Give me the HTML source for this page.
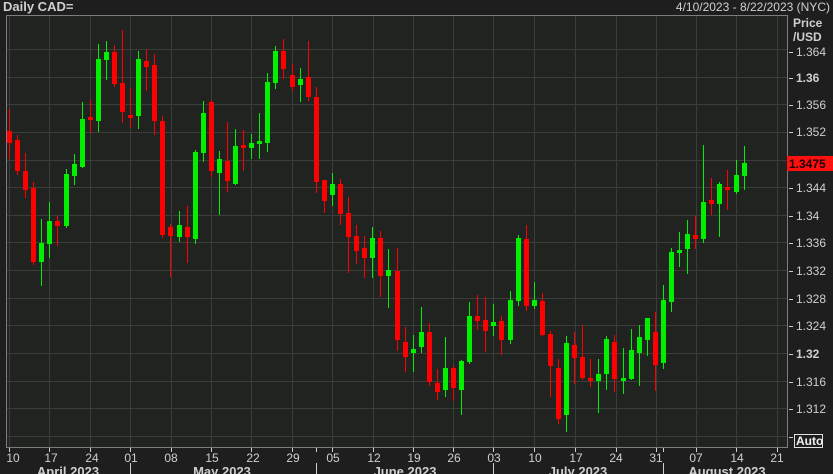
<!DOCTYPE html>
<html><head><meta charset="utf-8"><style>
html,body{margin:0;padding:0;background:#1e1e1e;width:833px;height:474px;overflow:hidden}
svg{display:block}
text{font-family:"Liberation Sans","DejaVu Sans",sans-serif;fill:#cfcfcf}
.r{fill:#ff0000}.g{fill:#00f000}
</style></head><body>
<svg width="833" height="474" viewBox="0 0 833 474" xmlns="http://www.w3.org/2000/svg">
<rect x="0" y="0" width="833" height="474" fill="#1e1e1e"/>
<rect x="6" y="15" width="781" height="432" fill="#212321"/>
<g stroke="#3b3d3b" stroke-width="1">
<path d="M6 49.5H787M6 77.5H787M6 104.5H787M6 132.5H787M6 160.5H787M6 187.5H787M6 215.5H787M6 242.5H787M6 270.5H787M6 298.5H787M6 325.5H787M6 353.5H787M6 381.5H787M6 408.5H787M6 436.5H787"/>
<path d="M9.5 15V447M49.5 15V447M90.5 15V447M130.5 15V447M171.5 15V447M211.5 15V447M251.5 15V447M292.5 15V447M332.5 15V447M373.5 15V447M413.5 15V447M453.5 15V447M493.5 15V447M534.5 15V447M575.5 15V447M616.5 15V447M656.5 15V447M696.5 15V447M736.5 15V447M777.5 15V447"/>
</g>
<path d="M6.5 15.5H787.5V447.5H6.5Z" fill="none" stroke="#7d7d7d" stroke-width="1"/>
<text x="3" y="11" font-size="13" font-weight="bold" fill="#c8c8c8">Daily CAD=</text>
<text x="830" y="11" font-size="12" text-anchor="end">4/10/2023 - 8/22/2023 (NYC)</text>
<text x="793" y="27" font-size="12" font-weight="bold">Price</text>
<text x="793" y="41" font-size="12" font-weight="bold">/USD</text>
<g stroke="#cfcfcf"><path d="M789 52.5H793M789 78.5H793M789 105.5H793M789 132.5H793M789 188.5H793M789 216.5H793M789 243.5H793M789 271.5H793M789 299.5H793M789 326.5H793M789 354.5H793M789 382.5H793M789 409.5H793M789 437.5H793"/></g>
<g font-size="12">
<text x="796" y="56">1.364</text>
<text x="796" y="82" font-weight="bold">1.36</text>
<text x="796" y="109">1.356</text>
<text x="796" y="136">1.352</text>
<text x="796" y="192">1.344</text>
<text x="796" y="220">1.34</text>
<text x="796" y="247">1.336</text>
<text x="796" y="275">1.332</text>
<text x="796" y="303">1.328</text>
<text x="796" y="330">1.324</text>
<text x="796" y="358" font-weight="bold">1.32</text>
<text x="796" y="386">1.316</text>
<text x="796" y="413">1.312</text>
</g>
<rect x="787" y="156" width="46" height="15" fill="#ff1010"/>
<text x="789" y="168" font-size="12" font-weight="bold" style="fill:#1a0000">1.3475</text>
<rect x="794.5" y="434.5" width="28" height="13" fill="none" stroke="#e0e0e0"/>
<text x="796" y="445" font-size="12" font-weight="bold" style="fill:#f0f0f0">Auto</text>
<g stroke="#cfcfcf"><path d="M9.5 448V452M49.5 448V452M90.5 448V452M130.5 448V452M171.5 448V452M211.5 448V452M251.5 448V452M292.5 448V452M316.5 448V452M332.5 448V452M373.5 448V452M413.5 448V452M453.5 448V452M493.5 448V452M534.5 448V452M575.5 448V452M616.5 448V452M656.5 448V452M663.5 448V452M696.5 448V452M736.5 448V452M777.5 448V452M130.5 463V474M316.5 463V474M493.5 463V474M663.5 463V474"/></g>
<g font-size="12" text-anchor="middle">
<text x="13" y="462">10</text><text x="51" y="462">17</text><text x="92" y="462">24</text><text x="131" y="462">01</text><text x="171" y="462">08</text><text x="212" y="462">15</text><text x="253" y="462">22</text><text x="293" y="462">29</text><text x="333" y="462">05</text><text x="374" y="462">12</text><text x="414" y="462">19</text><text x="454" y="462">26</text><text x="494" y="462">03</text><text x="535" y="462">10</text><text x="576" y="462">17</text><text x="616" y="462">24</text><text x="656" y="462">31</text><text x="696" y="462">07</text><text x="737" y="462">14</text><text x="777" y="462">21</text>
</g>
<g font-size="13" font-weight="bold" text-anchor="middle">
<text x="68" y="476">April 2023</text><text x="222" y="476">May 2023</text><text x="405" y="476">June 2023</text><text x="578" y="476">July 2023</text><text x="727" y="476">August 2023</text>
</g>
<g id="c">
<rect class="r" x="9" y="109" width="1" height="50"/><rect class="r" x="7" y="131" width="5" height="12"/>
<rect class="r" x="17" y="135" width="1" height="40"/><rect class="r" x="15" y="140" width="5" height="31"/>
<rect class="r" x="25" y="153" width="1" height="45"/><rect class="r" x="23" y="171" width="5" height="19"/>
<rect class="r" x="33" y="182" width="1" height="83"/><rect class="r" x="31" y="188" width="5" height="74"/>
<rect class="g" x="41" y="219" width="1" height="67"/><rect class="g" x="39" y="243" width="5" height="19"/>
<rect class="g" x="49" y="202" width="1" height="56"/><rect class="g" x="47" y="221" width="5" height="23"/>
<rect class="r" x="57" y="216" width="1" height="30"/><rect class="r" x="55" y="221" width="5" height="5"/>
<rect class="g" x="66" y="169" width="1" height="59"/><rect class="g" x="64" y="174" width="5" height="52"/>
<rect class="g" x="74" y="154" width="1" height="31"/><rect class="g" x="72" y="164" width="5" height="12"/>
<rect class="g" x="82" y="102" width="1" height="66"/><rect class="g" x="80" y="119" width="5" height="48"/>
<rect class="r" x="90" y="100" width="1" height="33"/><rect class="r" x="88" y="117" width="5" height="3"/>
<rect class="g" x="98" y="44" width="1" height="88"/><rect class="g" x="96" y="59" width="5" height="62"/>
<rect class="g" x="106" y="41" width="1" height="39"/><rect class="g" x="104" y="52" width="5" height="8"/>
<rect class="r" x="114" y="45" width="1" height="42"/><rect class="r" x="112" y="52" width="5" height="32"/>
<rect class="r" x="122" y="30" width="1" height="93"/><rect class="r" x="120" y="83" width="5" height="29"/>
<rect class="r" x="130" y="88" width="1" height="40"/><rect class="r" x="128" y="115" width="5" height="3"/>
<rect class="g" x="138" y="51" width="1" height="78"/><rect class="g" x="136" y="59" width="5" height="57"/>
<rect class="r" x="146" y="49" width="1" height="42"/><rect class="r" x="144" y="61" width="5" height="6"/>
<rect class="r" x="154" y="54" width="1" height="81"/><rect class="r" x="152" y="65" width="5" height="56"/>
<rect class="r" x="162" y="116" width="1" height="122"/><rect class="r" x="160" y="121" width="5" height="114"/>
<rect class="r" x="170" y="224" width="1" height="53"/><rect class="r" x="168" y="227" width="5" height="9"/>
<rect class="g" x="179" y="211" width="1" height="31"/><rect class="g" x="177" y="225" width="5" height="12"/>
<rect class="r" x="187" y="206" width="1" height="57"/><rect class="r" x="185" y="227" width="5" height="10"/>
<rect class="g" x="195" y="150" width="1" height="94"/><rect class="g" x="193" y="152" width="5" height="87"/>
<rect class="g" x="203" y="101" width="1" height="61"/><rect class="g" x="201" y="113" width="5" height="40"/>
<rect class="r" x="211" y="100" width="1" height="77"/><rect class="r" x="209" y="102" width="5" height="69"/>
<rect class="g" x="219" y="151" width="1" height="64"/><rect class="g" x="217" y="159" width="5" height="14"/>
<rect class="r" x="227" y="122" width="1" height="70"/><rect class="r" x="225" y="161" width="5" height="20"/>
<rect class="g" x="235" y="129" width="1" height="56"/><rect class="g" x="233" y="146" width="5" height="38"/>
<rect class="r" x="243" y="130" width="1" height="41"/><rect class="r" x="241" y="145" width="5" height="3"/>
<rect class="g" x="251" y="134" width="1" height="25"/><rect class="g" x="249" y="143" width="5" height="5"/>
<rect class="g" x="259" y="113" width="1" height="46"/><rect class="g" x="257" y="141" width="5" height="3"/>
<rect class="g" x="267" y="73" width="1" height="79"/><rect class="g" x="265" y="82" width="5" height="61"/>
<rect class="g" x="275" y="46" width="1" height="43"/><rect class="g" x="273" y="51" width="5" height="32"/>
<rect class="r" x="283" y="39" width="1" height="40"/><rect class="r" x="281" y="51" width="5" height="18"/>
<rect class="r" x="292" y="64" width="1" height="27"/><rect class="r" x="290" y="75" width="5" height="12"/>
<rect class="g" x="300" y="68" width="1" height="34"/><rect class="g" x="298" y="79" width="5" height="6"/>
<rect class="r" x="308" y="41" width="1" height="60"/><rect class="r" x="306" y="77" width="5" height="20"/>
<rect class="r" x="316" y="87" width="1" height="106"/><rect class="r" x="314" y="97" width="5" height="85"/>
<rect class="r" x="324" y="180" width="1" height="33"/><rect class="r" x="322" y="180" width="5" height="21"/>
<rect class="g" x="332" y="173" width="1" height="33"/><rect class="g" x="330" y="184" width="5" height="11"/>
<rect class="r" x="340" y="179" width="1" height="46"/><rect class="r" x="338" y="184" width="5" height="30"/>
<rect class="r" x="348" y="197" width="1" height="76"/><rect class="r" x="346" y="213" width="5" height="24"/>
<rect class="r" x="356" y="225" width="1" height="39"/><rect class="r" x="354" y="236" width="5" height="15"/>
<rect class="r" x="364" y="236" width="1" height="42"/><rect class="r" x="362" y="248" width="5" height="10"/>
<rect class="g" x="372" y="227" width="1" height="51"/><rect class="g" x="370" y="238" width="5" height="20"/>
<rect class="r" x="380" y="231" width="1" height="66"/><rect class="r" x="378" y="238" width="5" height="38"/>
<rect class="g" x="388" y="249" width="1" height="59"/><rect class="g" x="386" y="270" width="5" height="6"/>
<rect class="r" x="397" y="248" width="1" height="103"/><rect class="r" x="395" y="271" width="5" height="69"/>
<rect class="r" x="405" y="327" width="1" height="45"/><rect class="r" x="403" y="342" width="5" height="15"/>
<rect class="g" x="413" y="335" width="1" height="37"/><rect class="g" x="411" y="349" width="5" height="4"/>
<rect class="g" x="421" y="307" width="1" height="46"/><rect class="g" x="419" y="332" width="5" height="15"/>
<rect class="r" x="429" y="323" width="1" height="63"/><rect class="r" x="427" y="332" width="5" height="50"/>
<rect class="r" x="437" y="369" width="1" height="31"/><rect class="r" x="435" y="383" width="5" height="9"/>
<rect class="g" x="445" y="337" width="1" height="60"/><rect class="g" x="443" y="368" width="5" height="22"/>
<rect class="r" x="453" y="366" width="1" height="35"/><rect class="r" x="451" y="368" width="5" height="20"/>
<rect class="g" x="461" y="360" width="1" height="55"/><rect class="g" x="459" y="361" width="5" height="29"/>
<rect class="g" x="469" y="302" width="1" height="62"/><rect class="g" x="467" y="316" width="5" height="46"/>
<rect class="r" x="477" y="295" width="1" height="35"/><rect class="r" x="475" y="316" width="5" height="5"/>
<rect class="r" x="485" y="297" width="1" height="55"/><rect class="r" x="483" y="320" width="5" height="11"/>
<rect class="g" x="493" y="304" width="1" height="32"/><rect class="g" x="491" y="322" width="5" height="4"/>
<rect class="r" x="501" y="316" width="1" height="39"/><rect class="r" x="499" y="321" width="5" height="19"/>
<rect class="g" x="510" y="291" width="1" height="53"/><rect class="g" x="508" y="300" width="5" height="40"/>
<rect class="g" x="518" y="235" width="1" height="71"/><rect class="g" x="516" y="238" width="5" height="63"/>
<rect class="r" x="526" y="225" width="1" height="86"/><rect class="r" x="524" y="239" width="5" height="67"/>
<rect class="g" x="534" y="282" width="1" height="27"/><rect class="g" x="532" y="300" width="5" height="6"/>
<rect class="r" x="542" y="293" width="1" height="43"/><rect class="r" x="540" y="301" width="5" height="34"/>
<rect class="r" x="550" y="331" width="1" height="66"/><rect class="r" x="548" y="334" width="5" height="32"/>
<rect class="r" x="558" y="359" width="1" height="65"/><rect class="r" x="556" y="368" width="5" height="51"/>
<rect class="g" x="566" y="336" width="1" height="96"/><rect class="g" x="564" y="343" width="5" height="72"/>
<rect class="r" x="574" y="332" width="1" height="52"/><rect class="r" x="572" y="345" width="5" height="13"/>
<rect class="r" x="582" y="325" width="1" height="55"/><rect class="r" x="580" y="357" width="5" height="21"/>
<rect class="r" x="590" y="359" width="1" height="28"/><rect class="r" x="588" y="378" width="5" height="3"/>
<rect class="g" x="598" y="359" width="1" height="54"/><rect class="g" x="596" y="374" width="5" height="7"/>
<rect class="g" x="606" y="336" width="1" height="54"/><rect class="g" x="604" y="339" width="5" height="35"/>
<rect class="r" x="614" y="335" width="1" height="57"/><rect class="r" x="612" y="342" width="5" height="37"/>
<rect class="g" x="623" y="348" width="1" height="46"/><rect class="g" x="621" y="378" width="5" height="3"/>
<rect class="g" x="631" y="329" width="1" height="51"/><rect class="g" x="629" y="350" width="5" height="29"/>
<rect class="g" x="639" y="325" width="1" height="61"/><rect class="g" x="637" y="337" width="5" height="16"/>
<rect class="g" x="647" y="318" width="1" height="38"/><rect class="g" x="645" y="318" width="5" height="22"/>
<rect class="r" x="655" y="312" width="1" height="79"/><rect class="r" x="653" y="332" width="5" height="33"/>
<rect class="g" x="663" y="285" width="1" height="84"/><rect class="g" x="661" y="300" width="5" height="63"/>
<rect class="g" x="671" y="248" width="1" height="64"/><rect class="g" x="669" y="252" width="5" height="50"/>
<rect class="g" x="679" y="232" width="1" height="35"/><rect class="g" x="677" y="250" width="5" height="3"/>
<rect class="g" x="687" y="220" width="1" height="54"/><rect class="g" x="685" y="234" width="5" height="15"/>
<rect class="r" x="695" y="216" width="1" height="33"/><rect class="r" x="693" y="235" width="5" height="4"/>
<rect class="g" x="703" y="145" width="1" height="98"/><rect class="g" x="701" y="202" width="5" height="37"/>
<rect class="r" x="711" y="178" width="1" height="37"/><rect class="r" x="709" y="200" width="5" height="4"/>
<rect class="g" x="719" y="182" width="1" height="55"/><rect class="g" x="717" y="184" width="5" height="20"/>
<rect class="r" x="727" y="170" width="1" height="40"/><rect class="r" x="725" y="187" width="5" height="3"/>
<rect class="g" x="736" y="160" width="1" height="34"/><rect class="g" x="734" y="175" width="5" height="17"/>
<rect class="g" x="744" y="146" width="1" height="44"/><rect class="g" x="742" y="163" width="5" height="13"/>
</g>
</svg>
</body></html>
